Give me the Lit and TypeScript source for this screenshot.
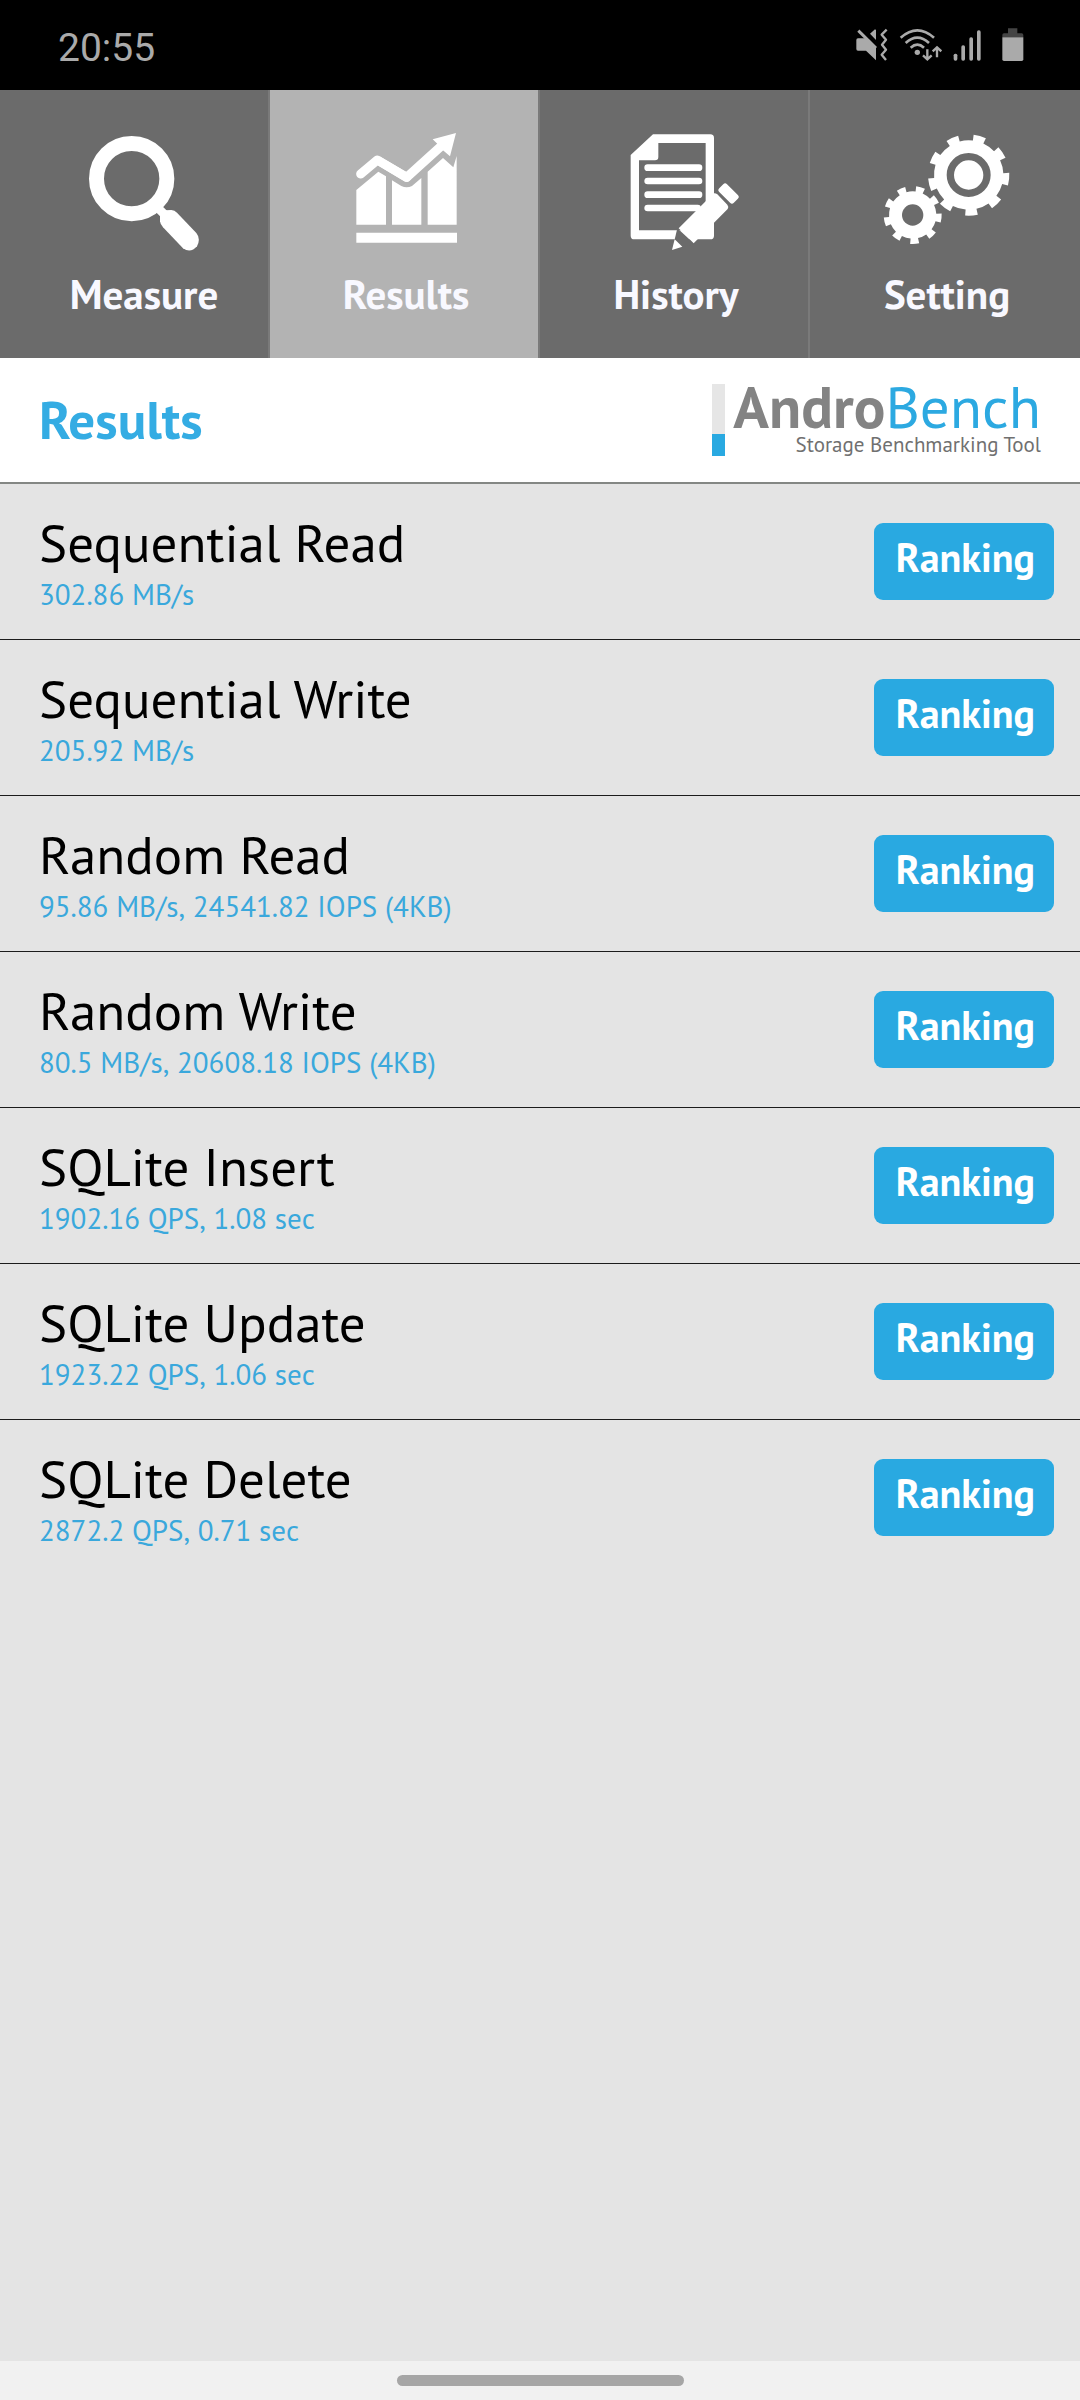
import { LitElement, html, css } from "lit";
import { customElement, property, state } from "lit/decorators.js";
import { classMap } from "lit/directives/class-map.js";

const FONT = css`"PT Sans", Lato, "Open Sans", sans-serif`;

/** Outline of a gear wheel with evenly spaced teeth. */
function gear(cx: number, cy: number, outer: number, root: number, teeth: number, phase: number, half: number) {
  const step = 360 / teeth;
  const at = (r: number, deg: number) => {
    const a = (deg * Math.PI) / 180;
    return `${(cx + r * Math.cos(a)).toFixed(1)} ${(cy + r * Math.sin(a)).toFixed(1)}`;
  };
  let d = "";
  for (let i = 0; i < teeth; i++) {
    const c = phase + i * step;
    d += `${i ? "L" : "M"}${at(root, c - half)}L${at(outer, c - half)}`;
    d += `A${outer} ${outer} 0 0 1 ${at(outer, c + half)}L${at(root, c + half)}`;
    d += `A${root} ${root} 0 0 1 ${at(root, c + step - half)}`;
  }
  return d + "Z";
}

const icons: Record<string, unknown> = {
  measure: html`<svg class="icon" width="112" height="120" viewBox="264 156 336 360" aria-hidden="true">
    <circle cx="395" cy="296" r="105.500" fill="none" stroke="#fff" stroke-width="45" />
    <path d="M478 388 500 410" stroke="#fff" stroke-width="26" />
    <path fill="#fff" d="M480 424V408Q481 393 497 391L514 390Q524 391 531 398L589 459Q603 476 591 499Q572 521 549 505L489 442Q481 433 480 424Z" />
  </svg>`,
  results: html`<svg class="icon" width="103" height="120" viewBox="285 156 309 360" aria-hidden="true">
    <path fill="none" stroke="#fff" stroke-width="27" stroke-linecap="round" stroke-linejoin="round" d="M302 282 352 240 440 292" />
    <path fill="none" stroke="#fff" stroke-width="27" stroke-linejoin="round" d="M352 240 440 292 546 196" />
    <path fill="#fff" d="M588 159 518 178 532 191 548 210 570 229Z" />
    <path fill="#fff" d="M289 330 355 275 378 289V434H289ZM396 301 424 318Q440 326 456 318L484 294V434H396ZM503 275 549 234 580 262 590 228V434H503ZM289 458H591V488H289Z" />
  </svg>`,
  history: html`<svg class="icon" width="130" height="120" viewBox="240 156 390 360" aria-hidden="true">
    <path fill="#fff" fill-rule="evenodd" d="M366 163H538Q549 163 549 174V467Q549 478 538 478H310Q299 478 299 467V225ZM382 189V231Q382 241 372 241H324V451H524V189Z" />
    <path stroke="#fff" stroke-width="20" stroke-linecap="round" d="M350 263H504M350 303H504M350 344H504M350 384H500" />
    <path fill="#6b6b6b" d="M439 445 490 491 423 512Z" />
    <path fill="#fff" d="M443 445 548 340Q554 339 559 343L589 374Q594 380 590 387L488 490ZM431 478 454 500 423 510Z" />
    <rect x="562" y="324" width="62" height="33" rx="8" fill="#fff" transform="rotate(45 593 340)" />
  </svg>`,
  setting: html`<svg class="icon" width="128" height="120" viewBox="246 156 384 360" aria-hidden="true">
    <path fill="#fff" d=${gear(503, 285, 122, 104, 9, 6, 9)} />
    <circle cx="503" cy="285" r="55" fill="none" stroke="#6b6b6b" stroke-width="22" />
    <path fill="#fff" d=${gear(335, 405, 87, 71, 9, 6, 9)} />
    <circle cx="335" cy="405" r="32" fill="#6b6b6b" />
  </svg>`,
};

@customElement("status-bar")
class StatusBar extends LitElement {
  static styles = css`
    :host {
      display: flex;
      justify-content: space-between;
      align-items: center;
      height: 90px;
      padding: 0 56px 0 58px;
      background: #000;
      color: #aaa;
    }
    .clock {
      font: 400 39px/48px Roboto, sans-serif;
      padding-top: 6px;
    }
    .tray {
      display: flex;
      gap: 11px;
    }
    .battery {
      margin-left: 10px;
    }
    svg {
      display: block;
    }
  `;
  render() {
    return html`
      <time class="clock">20:55</time>
      <div class="tray">
        <svg width="32" height="34" viewBox="108 86 96 102" role="img" aria-label="Muted, vibrate">
          <path fill="#aaa" d="M114 117H138L168 146V183L138 154H114Q109 154 109 149V122Q109 117 114 117ZM150 103 165 90 168 92V122Z" />
          <path fill="none" stroke="#aaa" stroke-width="9" d="M115 94 168 146" />
          <path fill="none" stroke="#aaa" stroke-width="7" stroke-linejoin="round" d="M200 91 185 106 198 121 186 136 198 151 185 166 198 182" />
        </svg>
        <svg width="43" height="34" viewBox="237 86 129 102" role="img" aria-label="Wi-Fi">
          <g fill="none" stroke="#aaa" stroke-width="8">
            <path d="M242 115Q292 71 342 115" />
            <path d="M257 131Q292 99 327 131" />
            <path d="M272 145Q292 127 312 145" />
            <path stroke-width="7" d="M322 150V180M309 168 322 180 335 168M351 174V144M338 156 351 144 364 156" />
          </g>
          <circle cx="292" cy="159" r="8" fill="#aaa" />
        </svg>
        <svg width="28" height="34" viewBox="397 86 84 102" role="img" aria-label="Signal">
          <g fill="#aaa">
            <rect x="399" y="163" width="11" height="21" rx="5" />
            <rect x="422" y="138" width="11" height="46" rx="5" />
            <rect x="446" y="114" width="11" height="70" rx="5" />
            <rect x="469" y="93" width="11" height="91" rx="5" />
          </g>
        </svg>
        <svg class="battery" width="22" height="34" viewBox="545 86 66 102" role="img" aria-label="Battery">
          <path fill="#444" d="M563 87H591V102H604Q609 102 609 107V114H546V107Q546 102 551 102H563Z" />
          <path fill="#aaa" d="M546 114H609V180Q609 185 604 185H551Q546 185 546 180Z" />
        </svg>
      </div>
    `;
  }
}

@customElement("tab-bar")
class TabBar extends LitElement {
  @state() private current = "results";

  private tabs = [
    { id: "measure", label: "Measure" },
    { id: "results", label: "Results" },
    { id: "history", label: "History" },
    { id: "setting", label: "Setting" },
  ];

  static styles = css`
    .tabs {
      display: grid;
      grid-template-columns: repeat(4, 1fr);
      background: #6b6b6b;
    }
    .tab {
      display: flex;
      flex-direction: column;
      align-items: center;
      gap: 18px;
      padding: 42px 0 40px 4px;
      border: 0;
      border-right: 2px solid #7a7a7a;
      background: none;
      color: #f8f8ff;
      font: 700 41px/48px ${FONT};
      cursor: pointer;
    }
    .tab:first-child {
      padding-left: 20px;
    }
    .tab:last-child {
      border-right: 0;
    }
    .active {
      background: #b3b3b3;
    }
    .icon {
      display: block;
    }
  `;
  render() {
    return html`<nav class="tabs">
      ${this.tabs.map(
        (t) => html`<button
          class=${classMap({ tab: true, active: t.id === this.current })}
          aria-current=${t.id === this.current ? "page" : "false"}
          @click=${() => (this.current = t.id)}
        >
          ${icons[t.id]}<span>${t.label}</span>
        </button>`
      )}
    </nav>`;
  }
}

@customElement("page-header")
class PageHeader extends LitElement {
  static styles = css`
    .header {
      display: flex;
      justify-content: space-between;
      align-items: center;
      padding: 22px 39px 24px;
      border-bottom: 2px solid #848784;
      background: #fff;
      font-family: ${FONT};
    }
    .title {
      margin: 2px 0 0;
      font-size: 53px;
      line-height: 60px;
      color: #34ace3;
    }
    .logo {
      display: flex;
      align-items: flex-end;
      gap: 8px;
    }
    .gauge {
      width: 13px;
      height: 72px;
      margin-bottom: 2px;
      background: linear-gradient(#e6e6e6 50px, #29a9e1 50px);
    }
    .words {
      text-align: right;
    }
    .name {
      font-size: 59px;
      line-height: 52px;
      color: #2ca9e1;
    }
    .name b {
      color: #838383;
    }
    .tagline {
      font-size: 21px;
      line-height: 26px;
      color: #707070;
    }
  `;
  render() {
    return html`<header class="header">
      <h1 class="title">Results</h1>
      <div class="logo">
        <div class="gauge"></div>
        <div class="words">
          <div class="name"><b>Andro</b>Bench</div>
          <div class="tagline">Storage Benchmarking Tool</div>
        </div>
      </div>
    </header>`;
  }
}

@customElement("result-row")
class ResultRow extends LitElement {
  @property() name = "";
  @property() value = "";

  static styles = css`
    .row {
      display: flex;
      justify-content: space-between;
      align-items: center;
      padding: 29px 26px 24px 39px;
      font-family: ${FONT};
    }
    .name {
      margin: 0;
      font-size: 53px;
      font-weight: 400;
      line-height: 60px;
      color: #000;
    }
    .value {
      margin: 0;
      font-size: 29px;
      line-height: 42px;
      font-kerning: none;
      color: #3aa8dc;
    }
    .rank {
      min-width: 180px;
      padding: 11px 19px 20px 22px;
      margin-bottom: 6px;
      border: 0;
      border-radius: 9px;
      background: #29a9e1;
      color: #fff;
      font: 700 40px/46px ${FONT};
      cursor: pointer;
    }
  `;
  render() {
    return html`<div class="row">
      <div>
        <h2 class="name">${this.name}</h2>
        <p class="value">${this.value}</p>
      </div>
      <button class="rank" aria-label="Ranking, ${this.name}">Ranking</button>
    </div>`;
  }
}

@customElement("app-root")
class AppRoot extends LitElement {
  private results = [
    { name: "Sequential Read", value: "302.86 MB/s" },
    { name: "Sequential Write", value: "205.92 MB/s" },
    { name: "Random Read", value: "95.86 MB/s, 24541.82 IOPS (4KB)" },
    { name: "Random Write", value: "80.5 MB/s, 20608.18 IOPS (4KB)" },
    { name: "SQLite Insert", value: "1902.16 QPS, 1.08 sec" },
    { name: "SQLite Update", value: "1923.22 QPS, 1.06 sec" },
    { name: "SQLite Delete", value: "2872.2 QPS, 0.71 sec" },
  ];

  static styles = css`
    :host {
      display: flex;
      flex-direction: column;
      min-height: 100vh;
      background: #e4e4e4;
    }
    .list {
      flex: 1;
      margin: 0;
      padding: 0;
      list-style: none;
    }
    .item + .item {
      border-top: 1px solid #1c1c1c;
    }
    .gesture {
      display: flex;
      justify-content: center;
      padding: 14px 0;
      background: #f1f1f1;
    }
    .pill {
      width: 287px;
      height: 11px;
      border-radius: 6px;
      background: #a6a6a6;
    }
  `;
  render() {
    return html`
      <status-bar></status-bar>
      <tab-bar></tab-bar>
      <page-header></page-header>
      <ul class="list">
        ${this.results.map(
          (r) => html`<li class="item"><result-row .name=${r.name} .value=${r.value}></result-row></li>`
        )}
      </ul>
      <div class="gesture"><div class="pill"></div></div>
    `;
  }
}
